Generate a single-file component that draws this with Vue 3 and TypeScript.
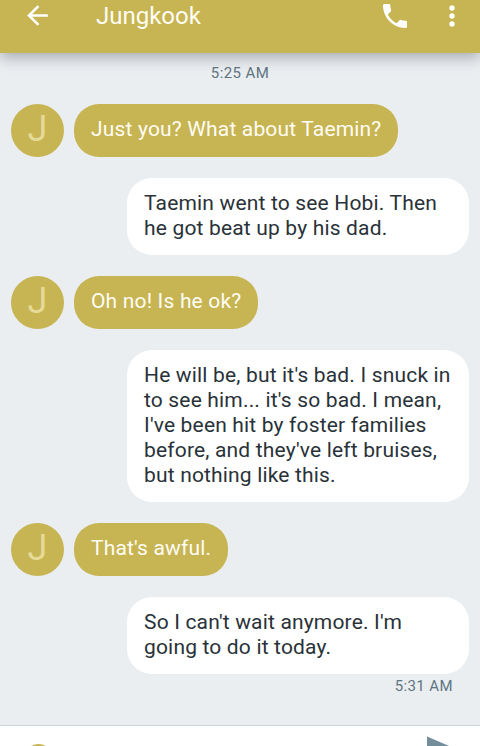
<script setup lang="ts">
interface Message {
  id: number
  own: boolean
  lines: string[]
}

const contact = 'Jungkook'
const messages: Message[] = [
  { id: 1, own: false, lines: ['Just you? What about Taemin?'] },
  { id: 2, own: true, lines: ['Taemin went to see Hobi. Then', 'he got beat up by his dad.'] },
  { id: 3, own: false, lines: ['Oh no! Is he ok?'] },
  {
    id: 4,
    own: true,
    lines: [
      "He will be, but it's bad. I snuck in",
      "to see him... it's so bad. I mean,",
      "I've been hit by foster families",
      "before, and they've left bruises,",
      'but nothing like this.',
    ],
  },
  { id: 5, own: false, lines: ["That's awful."] },
  { id: 6, own: true, lines: ["So I can't wait anymore. I'm", 'going to do it today.'] },
]
</script>

<template>
  <div class="screen">
    <header class="bar">
      <svg class="back" viewBox="0 0 24 24"><path d="M20 11H7.83l5.59-5.59L12 4l-8 8 8 8 1.41-1.41L7.83 13H20v-2z" /></svg>
      <h1 class="title">{{ contact }}</h1>
      <svg class="call" viewBox="0 0 24 24"><path d="M6.62 10.79c1.44 2.83 3.76 5.14 6.59 6.59l2.2-2.2c.27-.27.67-.36 1.02-.24 1.12.37 2.33.57 3.57.57.55 0 1 .45 1 1V20c0 .55-.45 1-1 1-9.39 0-17-7.61-17-17 0-.55.45-1 1-1h3.5c.55 0 1 .45 1 1 0 1.25.2 2.45.57 3.57.11.35.03.74-.25 1.02l-2.2 2.2z" /></svg>
      <svg class="more" viewBox="0 0 24 24"><circle cx="12" cy="6" r="2" /><circle cx="12" cy="12" r="2" /><circle cx="12" cy="18" r="2" /></svg>
    </header>
    <main class="chat">
      <time class="stamp">5:25 AM</time>
      <div class="thread">
        <div v-for="m in messages" :key="m.id" class="row" :class="{ own: m.own }">
          <span v-if="!m.own" class="avatar">{{ contact[0] }}</span>
          <p class="bubble"><span v-for="line in m.lines" :key="line" class="line">{{ line }}</span></p>
        </div>
      </div>
      <time class="stamp sent">5:31 AM</time>
    </main>
    <footer class="composer">
      <svg class="emoji" viewBox="0 0 26 26"><circle cx="13" cy="13" r="12" /></svg>
      <svg class="send" viewBox="0 0 24 24"><path d="M2.01 21L23 12 2.01 3 2 10l15 2-15 2z" /></svg>
    </footer>
  </div>
</template>

<style>
body {
  margin: 0;
  overflow: hidden;
}
</style>

<style scoped>
.screen {
  display: flex;
  flex-direction: column;
  height: 746px;
  overflow: hidden;
  background: #eaeef1;
  font-family: Roboto, sans-serif;
}
.bar {
  display: flex;
  align-items: flex-start;
  flex: none;
  box-sizing: border-box;
  height: 53px;
  padding: 0 12.5px 0 22px;
  background: #c7b453;
  box-shadow: 0 4px 14px rgba(40, 40, 50, 0.36);
  z-index: 1;
}
.bar svg {
  flex: none;
  fill: #fff;
}
.back {
  width: 31px;
  height: 31px;
}
.title {
  flex: 1;
  margin: 2px 0 0 43px;
  color: #fffdf3;
  font-size: 24px;
  font-weight: 400;
  line-height: 28px;
}
.call {
  width: 32px;
  height: 32px;
  margin: -0.5px 24.5px 0 0;
}
.more {
  width: 32px;
  height: 32px;
  margin-top: -0.5px;
}
.chat {
  display: flex;
  flex-direction: column;
  flex: none;
  box-sizing: border-box;
  height: 672px;
  padding: 10px 11px 0;
}
.stamp {
  align-self: center;
  height: 41px;
  color: #607480;
  font-size: 15px;
  line-height: 20px;
  letter-spacing: 0.4px;
}
.thread {
  display: flex;
  flex-direction: column;
  gap: 21px;
}
.row {
  display: flex;
  gap: 10px;
}
.own {
  justify-content: flex-end;
}
.avatar {
  flex: none;
  width: 53px;
  height: 53px;
  border-radius: 50%;
  background: #c7b453;
  color: #e6da97;
  font-size: 36px;
  font-weight: 400;
  line-height: 51px;
  text-align: center;
}
.bubble {
  box-sizing: border-box;
  min-height: 53px;
  margin: 0;
  padding: 13px 17px 14px;
  border-radius: 25px;
  background: #c7b453;
  color: #fffdf3;
  font-size: 21px;
  line-height: 25px;
  letter-spacing: 0.17px;
}
.own .bubble {
  width: 342px;
  background: #fff;
  color: #293238;
}
.line {
  display: block;
  white-space: nowrap;
}
.sent {
  align-self: flex-end;
  margin: 2px 16px 0 0;
}
.composer {
  display: flex;
  justify-content: space-between;
  flex: none;
  box-sizing: border-box;
  height: 60px;
  padding: 5.5px 20.5px 0 25px;
  border-top: 1px solid #cbd3d9;
  background: #fff;
}
.emoji {
  width: 27px;
  height: 27px;
  margin-top: 12.5px;
  fill: none;
  stroke: #c7b453;
  stroke-width: 2;
}
.send {
  width: 36px;
  height: 36px;
  fill: #748d9b;
}
</style>
